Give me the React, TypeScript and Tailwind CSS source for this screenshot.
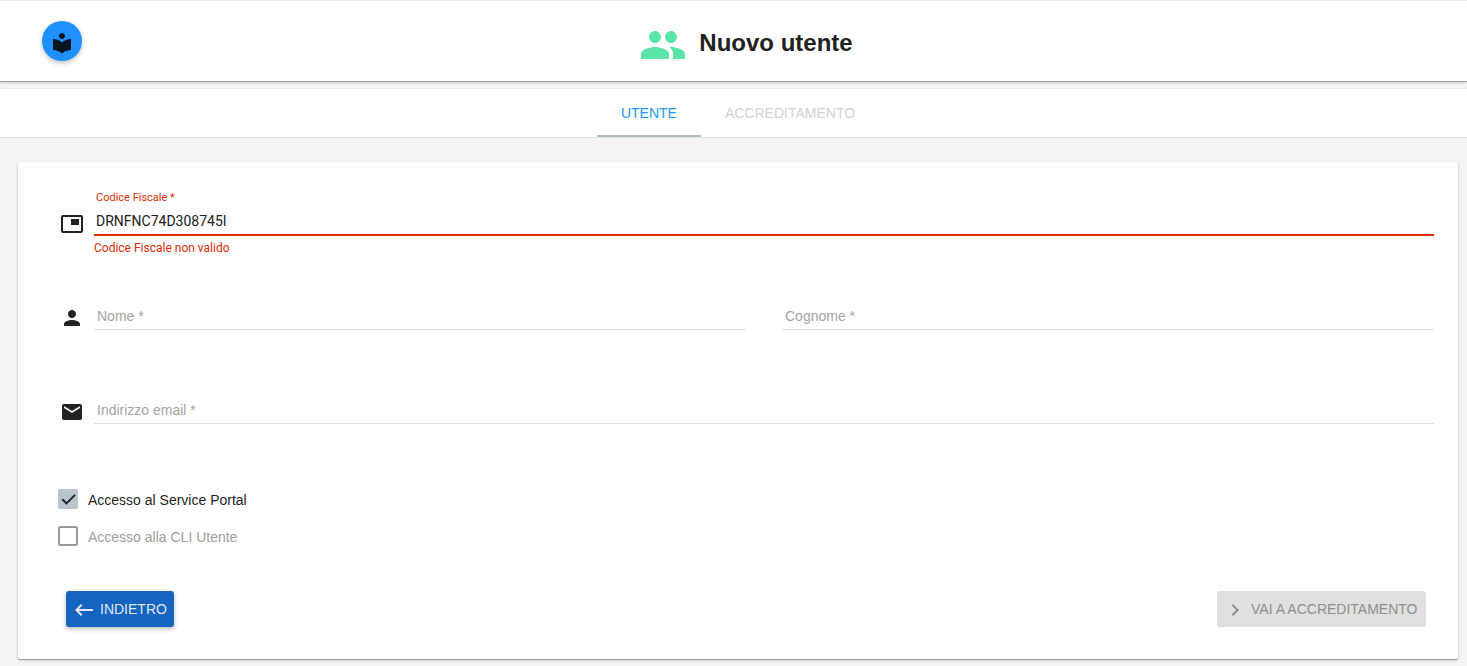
import { useId, useState } from "react";
import type { ReactNode } from "react";
import type { IconType } from "react-icons";
import {
  MdChevronRight,
  MdEmail,
  MdKeyboardBackspace,
  MdLocalLibrary,
  MdPeople,
  MdPerson,
  MdPictureInPicture,
} from "react-icons/md";

type FieldProps = {
  label: string;
  type?: string;
  initial?: string;
  error?: string;
};

function Field({ label, type = "text", initial = "", error }: FieldProps) {
  const id = useId();
  const [value, setValue] = useState(initial);
  const filled = value !== "";
  return (
    <div className="grid min-w-0 flex-1 grid-cols-1 grid-rows-[20px_30px_44px]">
      <label
        htmlFor={id}
        className={
          filled
            ? `col-start-1 row-start-1 pl-[2px] pt-1 font-[Roboto,sans-serif] text-[11px] leading-4 ${error ? "text-[#dd2c00]" : "text-[#9e9e9e]"}`
            : "pointer-events-none z-10 col-start-1 row-start-2 pl-[3px] text-sm leading-8 text-[#a3a3a3]"
        }
      >
        {label} *
      </label>
      <input
        id={id}
        type={type}
        value={value}
        onChange={(e) => setValue(e.target.value)}
        aria-invalid={Boolean(error)}
        className={`col-start-1 row-start-2 w-full bg-transparent pt-[2px] pl-[2px] font-[Roboto,sans-serif] text-sm text-[#212121] outline-none ${
          error ? "border-b-2 border-[#dd2c00]" : "border-b border-[#e0e0e0]"
        }`}
      />
      {error && (
        <p className="row-start-3 pt-1 font-[Roboto,sans-serif] text-xs leading-4 text-[#dd2c00]">{error}</p>
      )}
    </div>
  );
}

function FieldRow({ icon: Icon, children }: { icon: IconType; children: ReactNode }) {
  return (
    <div className="flex gap-[10px]">
      <Icon className="mt-[26px] size-6 shrink-0 text-[#212121]" />
      <div className="flex min-w-0 flex-1 gap-9">{children}</div>
    </div>
  );
}

function Checkbox({ label, checked = false, disabled = false }: { label: string; checked?: boolean; disabled?: boolean }) {
  return (
    <label className={`flex items-center gap-[10px] self-start text-sm ${disabled ? "text-[#9e9e9e]" : "text-black/90"}`}>
      <span className="grid size-5">
        <input
          type="checkbox"
          defaultChecked={checked}
          disabled={disabled}
          className="peer col-start-1 row-start-1 size-5 appearance-none rounded-xs border-2 border-[#999999] checked:border-[#b9c5cc] checked:bg-[#b9c5cc]"
        />
        <svg
          viewBox="0 0 20 20"
          fill="none"
          stroke="#212121"
          strokeWidth="2"
          className="pointer-events-none invisible col-start-1 row-start-1 size-5 peer-checked:visible"
        >
          <path d="M4.3 10.2 8.5 14.4 17 5.9" />
        </svg>
      </span>
      <span className="pt-[2px] leading-[18px]">{label}</span>
    </label>
  );
}

export default function App() {
  return (
    <div className="min-h-screen bg-[#f4f4f4] pb-[7px] font-['Liberation_Sans',Arial,sans-serif] text-[#212121]">
      <header className="grid h-[82px] grid-cols-[1fr_auto_1fr] items-center border-t border-b border-t-[#ebebeb] border-b-[#a6a6a6] bg-white shadow-[0_1px_2px_rgba(0,0,0,0.16)]">
        <button
          type="button"
          aria-label="Biblioteca"
          className="ml-[42px] flex size-10 items-center justify-center rounded-full bg-[#1e90ff] pt-[3px] shadow-[0_2px_5px_rgba(0,0,0,0.26)]"
        >
          <MdLocalLibrary className="size-6 text-[#07131f]" />
        </button>
        <div className="flex items-center gap-3 pl-[25px]">
          <MdPeople className="mt-2 size-12 text-[#5ae4a8]" />
          <h1 className="pt-[3px] text-2xl font-bold">Nuovo utente</h1>
        </div>
      </header>

      <nav className="mt-[6px] border-t border-b border-t-[#ebebeb] border-b-[#e0e0e0] bg-white">
        <div role="tablist" className="flex justify-center pl-[9px]">
          <button
            type="button"
            role="tab"
            aria-selected="true"
            className="h-12 border-b-2 border-[#b0bec5] px-6 pt-[2px] text-sm text-[#2196f3]"
          >
            UTENTE
          </button>
          <button
            type="button"
            role="tab"
            aria-selected="false"
            disabled
            className="h-12 border-b-2 border-transparent px-6 pt-[2px] text-sm text-[#d3d3d3]"
          >
            ACCREDITAMENTO
          </button>
        </div>
      </nav>

      <main className="mt-6 mr-[9px] ml-[18px] rounded-xs bg-white pt-6 pr-6 pb-8 pl-10 shadow-[0_1px_3px_rgba(0,0,0,0.2),0_1px_1px_rgba(0,0,0,0.3)]">
        <form>
          <div className="pl-[2px]">
            <FieldRow icon={MdPictureInPicture}>
              <Field label="Codice Fiscale" initial="DRNFNC74D308745I" error="Codice Fiscale non valido" />
            </FieldRow>
            <FieldRow icon={MdPerson}>
              <Field label="Nome" />
              <Field label="Cognome" />
            </FieldRow>
            <FieldRow icon={MdEmail}>
              <Field label="Indirizzo email" type="email" />
            </FieldRow>
          </div>

          <div className="mt-[21px] flex flex-col gap-[17px]">
            <Checkbox label="Accesso al Service Portal" checked />
            <Checkbox label="Accesso alla CLI Utente" disabled />
          </div>

          <div className="mt-[45px] flex justify-between px-2">
            <button
              type="button"
              className="flex h-9 min-w-[108px] items-center gap-1 rounded-[3px] bg-[#1565c0] px-[6px] text-sm text-white/87 shadow-[0_2px_5px_rgba(0,0,0,0.26)]"
            >
              <MdKeyboardBackspace className="mt-[2px] size-6" />
              INDIETRO
            </button>
            <button
              type="submit"
              disabled
              className="flex h-9 min-w-[209px] items-center gap-1 rounded-[3px] bg-[#e0e0e0] px-[6px] text-sm text-[#8e8e8e]"
            >
              <MdChevronRight className="mt-[2px] size-6" />
              VAI A ACCREDITAMENTO
            </button>
          </div>
        </form>
      </main>
    </div>
  );
}
